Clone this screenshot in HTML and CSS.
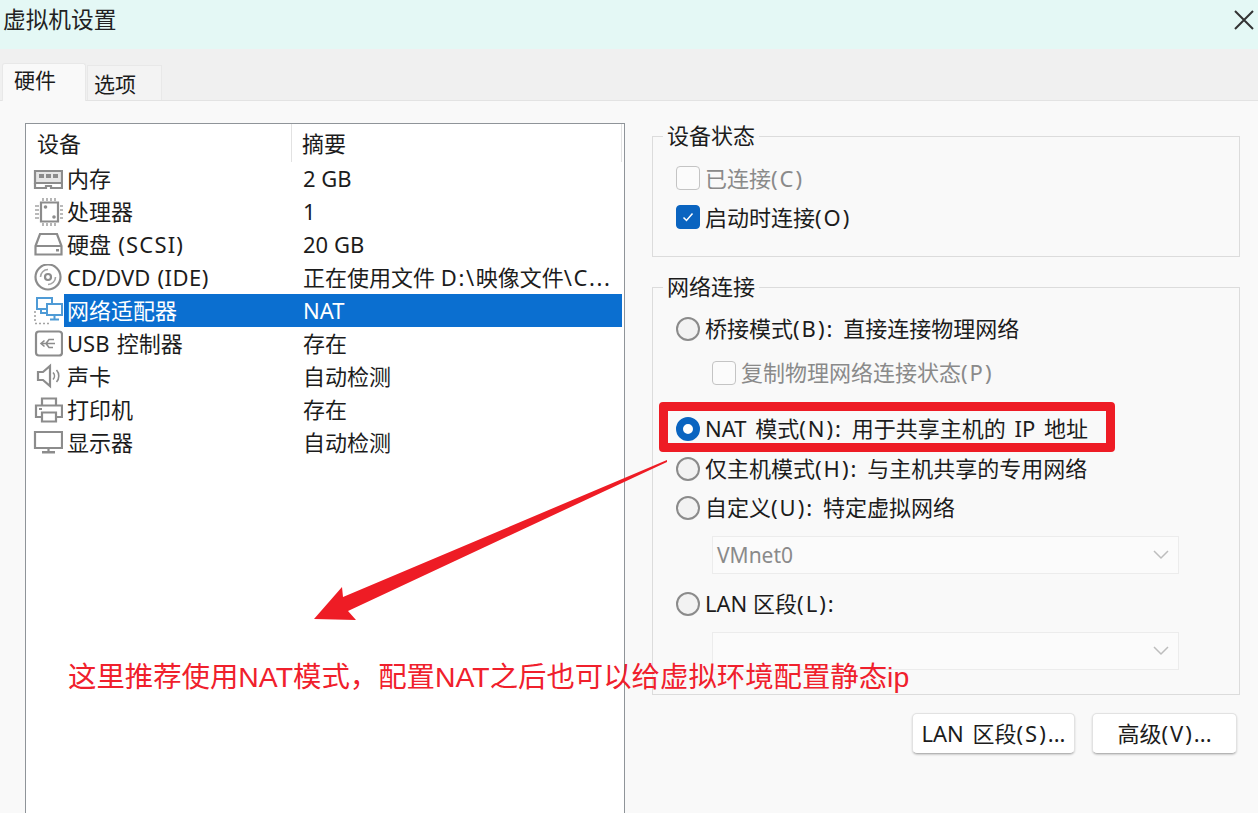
FILE: index.html
```html
<!DOCTYPE html>
<html lang="zh-CN">
<head>
<meta charset="utf-8">
<title>虚拟机设置</title>
<link rel="stylesheet" href="styles.css">
</head>
<body>
<div class="window">
  <header class="titlebar">
    <span class="title">虚拟机设置</span>
    <svg class="close" width="20" height="20" viewBox="0 0 20 20"><path d="M1 1L19 19M19 1L1 19"/></svg>
  </header>
  <nav class="tabs">
    <div class="tab tab-active">硬件</div>
    <div class="tab">选项</div>
  </nav>
  <main class="content">
    <section class="devices">
      <div class="dev-head"><div class="head-name">设备</div><div class="head-sum">摘要</div></div>
      <div class="row">
        <svg class="icon" viewBox="0 0 30 28"><path class="ic ic-tint" d="M2 6h27v12H2z"/><path class="ifill" d="M6 9h5v4H6zM13 9h5v4h-5zM20 9h5v4h-5z"/><path class="ic" d="M2 18v5h11v-2h5v2h11v-5"/></svg>
        <div class="name">内存</div><div class="sum">2 GB</div>
      </div>
      <div class="row">
        <svg class="icon" viewBox="0 0 30 28"><path class="ic" d="M8 4.500h17v19H8z"/><path class="ic dash" d="M10 0v3M14 0v3M18 0v3M22 0v3M10 25v3M14 25v3M18 25v3M22 25v3M2 8h4M2 12h4M2 16h4M2 20h4M27 8h3M27 12h3M27 16h3M27 20h3"/><circle class="ifill" cx="12.500" cy="9" r="1.800"/><circle class="ifill" cx="21" cy="19" r="1.800"/></svg>
        <div class="name">处理器</div><div class="sum">1</div>
      </div>
      <div class="row">
        <svg class="icon" viewBox="0 0 30 28"><path class="ic" d="M2.500 15L7 3h17l4.500 12v8.500h-26zM2.500 15h26"/><path class="ifill" d="M23 18h3v2.500h-3z"/></svg>
        <div class="name">硬盘 <span class="key-s">(SCSI)</span></div><div class="sum">20 GB</div>
      </div>
      <div class="row">
        <svg class="icon" viewBox="0 0 30 28"><circle class="ic" cx="15" cy="13" r="12.500"/><circle class="ic" cx="15" cy="13" r="3"/><path class="ic dash" d="M7.500 13a7.500 7.500 0 0 1 7.500-7.500M22.500 13a7.500 7.500 0 0 1-7.500 7.500"/></svg>
        <div class="name">CD/DVD <span class="key-xs">(IDE)</span></div><div class="sum">正在使用文件 <span class="key-s">D:\</span>映像文件<span class="key-s">\C...</span></div>
      </div>
      <div class="row row-selected">
        <svg class="icon" viewBox="0 0 30 28"><path class="ic-blue" d="M4 1h15v11H4zM8 12v4h6"/><path class="ic-blue ic-paper" d="M14 7h15v11H14z"/><path class="ic-blue" d="M21.500 18v4M17 22.500h9"/><path class="ic dash" d="M2 14v2M2 18v2M2 22v2M2 26.500h2M6 26.500h2M10 26.500h2M14 26.500h2"/></svg>
        <div class="name">网络适配器</div><div class="sum">NAT</div>
      </div>
      <div class="row">
        <svg class="icon" viewBox="0 0 30 28"><rect class="ic" x="3" y="1.500" width="26" height="24" rx="3"/><path class="ic thin" d="M8 13.500h14M11.500 10.500l-3.500 3 3.500 3M13 13.500l3-4h5M13 13.500l3 4h4"/></svg>
        <div class="name">USB 控制器</div><div class="sum">存在</div>
      </div>
      <div class="row">
        <svg class="icon" viewBox="0 0 30 28"><path class="ic" d="M5 9h5l7-6v20l-7-6H5z"/><path class="ic thin" d="M20 9.500a5 5 0 0 1 0 7M23.500 7a9 9 0 0 1 0 12"/></svg>
        <div class="name">声卡</div><div class="sum">自动检测</div>
      </div>
      <div class="row">
        <svg class="icon" viewBox="0 0 30 28"><path class="ic" d="M9 9V2.500h14V9M9 21H3V9.500h26V21h-6M9 16.500h14v9H9z"/><path class="ifill" d="M6 12h3v2H6z"/></svg>
        <div class="name">打印机</div><div class="sum">存在</div>
      </div>
      <div class="row">
        <svg class="icon" viewBox="0 0 30 28"><path class="ic" d="M2 3h27v16H2zM15.500 19v3"/><path class="ifill" d="M9 22h13v2.500H9z"/></svg>
        <div class="name">显示器</div><div class="sum">自动检测</div>
      </div>
    </section>
    <section class="settings">
      <fieldset class="group group-status">
        <legend>设备状态</legend>
        <div class="opt off"><span class="check"></span><span>已连接<span class="key">(C)</span></span></div>
        <div class="opt opt-close"><span class="check check-on"><svg width="14" height="14" viewBox="0 0 14 14"><path d="M2.500 7.500l3 3 6-7"/></svg></span><span>启动时连接<span class="key">(O)</span></span></div>
      </fieldset>
      <fieldset class="group group-net">
        <legend>网络连接</legend>
        <div class="opt"><span class="radio"></span><span>桥接模式<span class="key">(B):</span> 直接连接物理网络</span></div>
        <div class="opt off sub"><span class="check"></span><span>复制物理网络连接状态<span class="key">(P)</span></span></div>
        <div class="opt gap-nat"><span class="radio radio-on"></span><span>NAT 模式<span class="key">(N):</span> 用于共享主机的 IP 地址</span></div>
        <div class="opt gap-host"><span class="radio"></span><span>仅主机模式<span class="key">(H):</span> 与主机共享的专用网络</span></div>
        <div class="opt gap-tight"><span class="radio"></span><span>自定义<span class="key">(U):</span> 特定虚拟网络</span></div>
        <div class="select gap-select">VMnet0<svg width="16" height="10" viewBox="0 0 16 10"><path d="M1 1l7 7 7-7"/></svg></div>
        <div class="opt gap-lan word-tight"><span class="radio"></span><span>LAN 区段<span class="key">(L):</span></span></div>
        <div class="select gap-select"><svg width="16" height="10" viewBox="0 0 16 10"><path d="M1 1l7 7 7-7"/></svg></div>
      </fieldset>
      <div class="actions">
        <button class="btn btn-lan">LAN 区段<span class="key">(S)</span>...</button>
        <button class="btn btn-adv">高级<span class="key">(V)</span>...</button>
      </div>
    </section>
  </main>
  <div class="mark-box"></div>
  <svg class="mark-arrow" width="1258" height="813" viewBox="0 0 1258 813"><polygon points="667,460 343,597 342,587 314,619 356,620 348,611 667,462"/></svg>
  <div class="mark-text">这里推荐使用NAT模式，配置NAT之后也可以给虚拟环境配置静态ip</div>
</div>
</body>
</html>
```

FILE: styles.css
```css
* { box-sizing: border-box; }
html, body { margin: 0; height: 100%; overflow: hidden; }
body { font-family: "Noto Sans", "Noto Sans CJK SC", sans-serif; font-size: 22px; word-spacing: 3px; color: #1c1c1c; }
.window { position: relative; width: 1258px; height: 813px; display: flex; flex-direction: column; background: #f9f9f9; overflow: hidden; }
.key { letter-spacing: 2px; }
.key-s { letter-spacing: 1.200px; }
.key-xs { letter-spacing: .5px; }
.word-tight { word-spacing: 0; }

.titlebar { height: 49px; flex: none; background: #e4f8f5; display: flex; align-items: center; justify-content: space-between; padding: 0 4px 10px 3px; }
.title { font-size: 22.700px; line-height: 30px; color: #222; }
.close { fill: none; stroke: #333; stroke-width: 2; }

.tabs { height: 52px; flex: none; background: #f0f0f0; border-bottom: 1px solid #e3e3e3; display: flex; align-items: flex-end; padding-left: 2px; gap: 1px; }
.tab { width: 75px; height: 35px; padding-left: 6px; font-size: 21px; line-height: 36px; background: #f3f3f3; border: 1px solid #e8e8e8; border-bottom: none; }
.tab-active { width: 84px; height: 38px; margin-bottom: -1px; padding-left: 11px; line-height: 32px; background: #f9f9f9; border-radius: 3px 3px 0 0; }

.content { flex: 1; min-height: 0; display: flex; align-items: stretch; padding: 20px 0 0 25px; gap: 27px; }
.devices { width: 600px; margin-top: 2px; margin-bottom: -4px; background: #fff; border: 1px solid #8f9499; }
.dev-head { height: 38px; display: flex; align-items: center; }
.head-name { width: 266px; height: 38px; padding-left: 11px; line-height: 38px; border-right: 1px solid #e2e2e2; }
.head-sum { width: 330px; height: 38px; padding-left: 10px; line-height: 38px; border-right: 1px solid #e2e2e2; }
.row { height: 33px; display: flex; align-items: center; padding-left: 7px; padding-right: 2px; line-height: 32px; }
.icon { width: 30px; height: 28px; flex: none; margin-right: 1px; }
.name { width: 227px; flex: none; padding-left: 3px; align-self: stretch; word-spacing: 1.500px; }
.sum { flex: 1; padding-left: 12px; align-self: stretch; white-space: nowrap; word-spacing: 0; }
.sum .key-s { letter-spacing: 1.600px; }
.row-selected .name, .row-selected .sum { background: #0b6fd0; color: #fff; }
.ic, .ic-blue { fill: none; stroke: #8c8c8c; stroke-width: 2.200; }
.ic-tint { fill: #e6e6e6; }
.ic-blue { stroke: #4f9bd6; stroke-width: 2; }
.ic-paper { fill: #fff; }
.thin { stroke-width: 1.600; }
.dash { stroke: #a4a4a4; stroke-width: 1.600; }
.ifill { fill: #8c8c8c; }

.settings { width: 588px; display: flex; flex-direction: column; }
.group { margin: 0; padding: 0 0 0 23px; border: 1px solid #dcdcdc; min-width: 0; }
.group legend { margin-left: -13px; padding: 0 4px 2px; line-height: 28px; }
.group-status { padding-top: 9px; padding-bottom: 21px; }
.group-net { margin-top: 15px; padding-top: 8px; padding-bottom: 24px; }

.opt { height: 38px; padding-bottom: 2px; display: flex; align-items: center; gap: 5px; white-space: nowrap; }
.group-status .opt { height: 36px; }
.group-status .opt-close { margin-top: 3px; }
.group-net .opt { padding-bottom: 4px; }
.group-net .opt > :first-child { margin-top: 4px; }
.off { color: #8a8a8a; }
.sub { margin-top: 6px; padding-left: 36px; }
.gap-nat { margin-top: 18px; }
.gap-host { margin-top: 2px; }
.gap-tight { margin-top: 1px; }
.gap-select { margin-top: 9px; }
.gap-lan { margin-top: 11px; }

.check { width: 24px; height: 24px; margin-top: 2px; flex: none; border: 1px solid #c4c4c4; border-radius: 4px; background: #fbfbfb; display: flex; align-items: center; justify-content: center; }
.check-on { background: #0a64c0; border-color: #0a64c0; }
.check-on svg { fill: none; stroke: #fff; stroke-width: 1.500; }
.radio { width: 24px; height: 24px; margin-top: 2px; flex: none; border: 2px solid #8b8b8b; border-radius: 50%; background: #f2f2f2; }
.radio-on { border: 7px solid #0a64c0; background: #fff; }

.select { width: 467px; height: 38px; margin-left: 36px; padding: 0 9px 0 4px; display: flex; align-items: center; border: 1px solid #ececec; background: #fbfbfb; color: #8a8a8a; font-size: 21px; }
.select svg { margin-left: auto; fill: none; stroke: #bdbdbd; stroke-width: 1.500; }

.actions { display: flex; justify-content: flex-end; gap: 17px; margin-top: 18px; padding-right: 3px; }
.btn { height: 41px; padding: 0 0 4px; border: 1px solid #e2e2e2; border-bottom-color: #b5b5b5; border-radius: 5px; background: #fff; color: #1c1c1c; font: inherit; word-spacing: 3px; box-shadow: 0 1px 2px rgba(0,0,0,.18); white-space: nowrap; }
.btn-lan { width: 163px; }
.btn-adv { width: 145px; }

.mark-box { position: absolute; left: 659px; top: 402px; width: 456px; height: 50px; border: 9px solid #ee1c25; border-radius: 4px; }
.mark-arrow { position: absolute; left: 0; top: 0; pointer-events: none; fill: #ee1c25; }
.mark-text { position: absolute; left: 68px; top: 657px; font-family: "Liberation Sans", "Noto Sans CJK SC", sans-serif; font-size: 28.400px; word-spacing: 0; line-height: 40px; color: #f0202c; white-space: nowrap; }
```
